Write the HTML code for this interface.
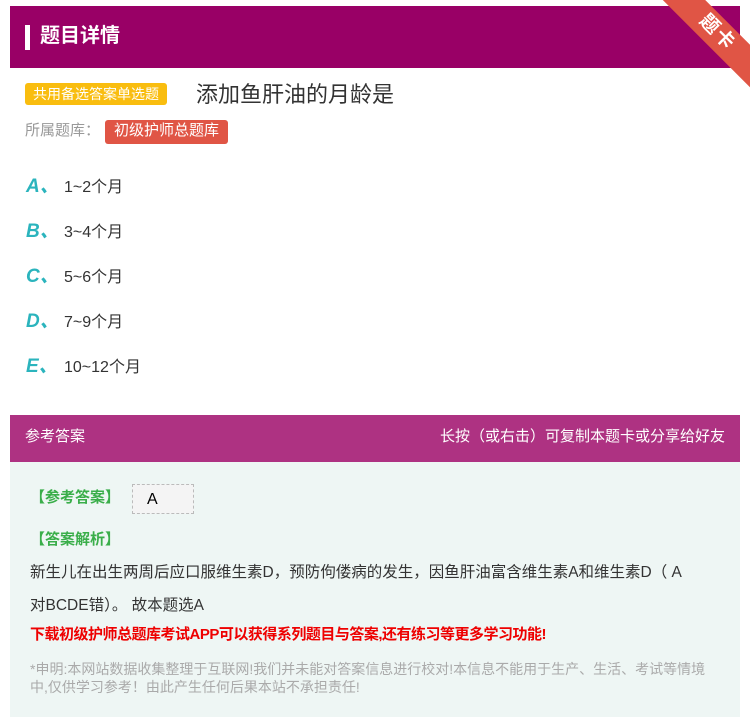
<!DOCTYPE html>
<html><head><meta charset="utf-8"><style>
body{margin:0;width:750px;height:717px;background:#fff;font-family:"Liberation Sans","Noto Sans CJK SC",sans-serif;position:relative;overflow:hidden}
.hd{position:absolute;left:10px;top:6px;width:730px;height:62px;background:#990066}
.hd .bar{position:absolute;left:15px;top:19px;width:5px;height:25px;background:#fff}
.hd .t{position:absolute;left:30px;top:15px;color:#fff;font-size:20px;font-weight:bold;line-height:30px}
.rib{position:absolute;left:652px;top:18px;width:130px;height:30px;background:#e05545;transform:rotate(45deg);color:#fff;font-size:19px;font-weight:bold;text-align:center;line-height:30px;letter-spacing:2px}
.tag{position:absolute;left:25px;top:83px;background:#f9bd0f;color:#fff;font-size:14px;padding:0 8px;height:22px;line-height:22px;border-radius:3px}
.q{position:absolute;left:196px;top:80px;font-size:22px;color:#333;line-height:30px}
.lib{position:absolute;left:25px;top:121px;color:#999;font-size:15px;line-height:20px}
.lt{position:absolute;left:105px;top:120px;background:#e05545;color:#fff;font-size:15px;padding:0 9px;height:24px;line-height:22px;border-radius:3px}
.op{position:absolute;left:26px;font-size:16px;color:#333;line-height:24px}
.op b{color:#2bb4bd;font-style:italic;font-size:19px;font-weight:bold;display:inline-block;width:38px}
.ah{position:absolute;left:10px;top:415px;width:730px;height:47px;background:#ae3282;color:#fff;font-size:15px;line-height:44px}
.ab{position:absolute;left:10px;top:462px;width:730px;height:255px;background:#eef6f4}
.g{color:#3aae4a;font-weight:bold;font-size:15px;position:absolute;left:20px}
</style></head><body>
<div class="hd"><div class="bar"></div><div class="t">题目详情</div></div>
<div class="rib">题卡</div>
<div class="tag">共用备选答案单选题</div>
<div class="q">添加鱼肝油的月龄是</div>
<div class="lib">所属题库：</div>
<div class="lt">初级护师总题库</div>
<div class="op" style="top:175px"><b>A、</b>1~2个月</div>
<div class="op" style="top:220px"><b>B、</b>3~4个月</div>
<div class="op" style="top:265px"><b>C、</b>5~6个月</div>
<div class="op" style="top:310px"><b>D、</b>7~9个月</div>
<div class="op" style="top:355px"><b>E、</b>10~12个月</div>
<div class="ah"><span style="position:absolute;left:15px">参考答案</span><span style="position:absolute;right:15px">长按（或右击）可复制本题卡或分享给好友</span></div>
<div class="ab">
<div class="g" style="top:24px">【参考答案】</div>
<div style="position:absolute;left:122px;top:22px;width:62px;height:30px;background:#f4f4f4;border:1px dashed #bbb;font-size:16px;line-height:30px;padding-left:14px;box-sizing:border-box">A</div>
<div class="g" style="top:66px">【答案解析】</div>
<div style="position:absolute;left:20px;top:94px;width:680px;font-size:15.5px;color:#333;line-height:33px">新生儿在出生两周后应口服维生素D，预防佝偻病的发生，因鱼肝油富含维生素A和维生素D（ A<br>对BCDE错）。 故本题选A</div>
<div style="position:absolute;left:20px;top:162px;color:#e00;font-size:15px;font-weight:bold;line-height:22px;letter-spacing:-0.5px">下载初级护师总题库考试APP可以获得系列题目与答案,还有练习等更多学习功能!</div>
<div style="position:absolute;left:20px;top:198px;width:680px;color:#aaa;font-size:14px;line-height:18px">*申明:本网站数据收集整理于互联网!我们并未能对答案信息进行校对!本信息不能用于生产、生活、考试等情境中,仅供学习参考！由此产生任何后果本站不承担责任!</div>
</div>
</body></html>
